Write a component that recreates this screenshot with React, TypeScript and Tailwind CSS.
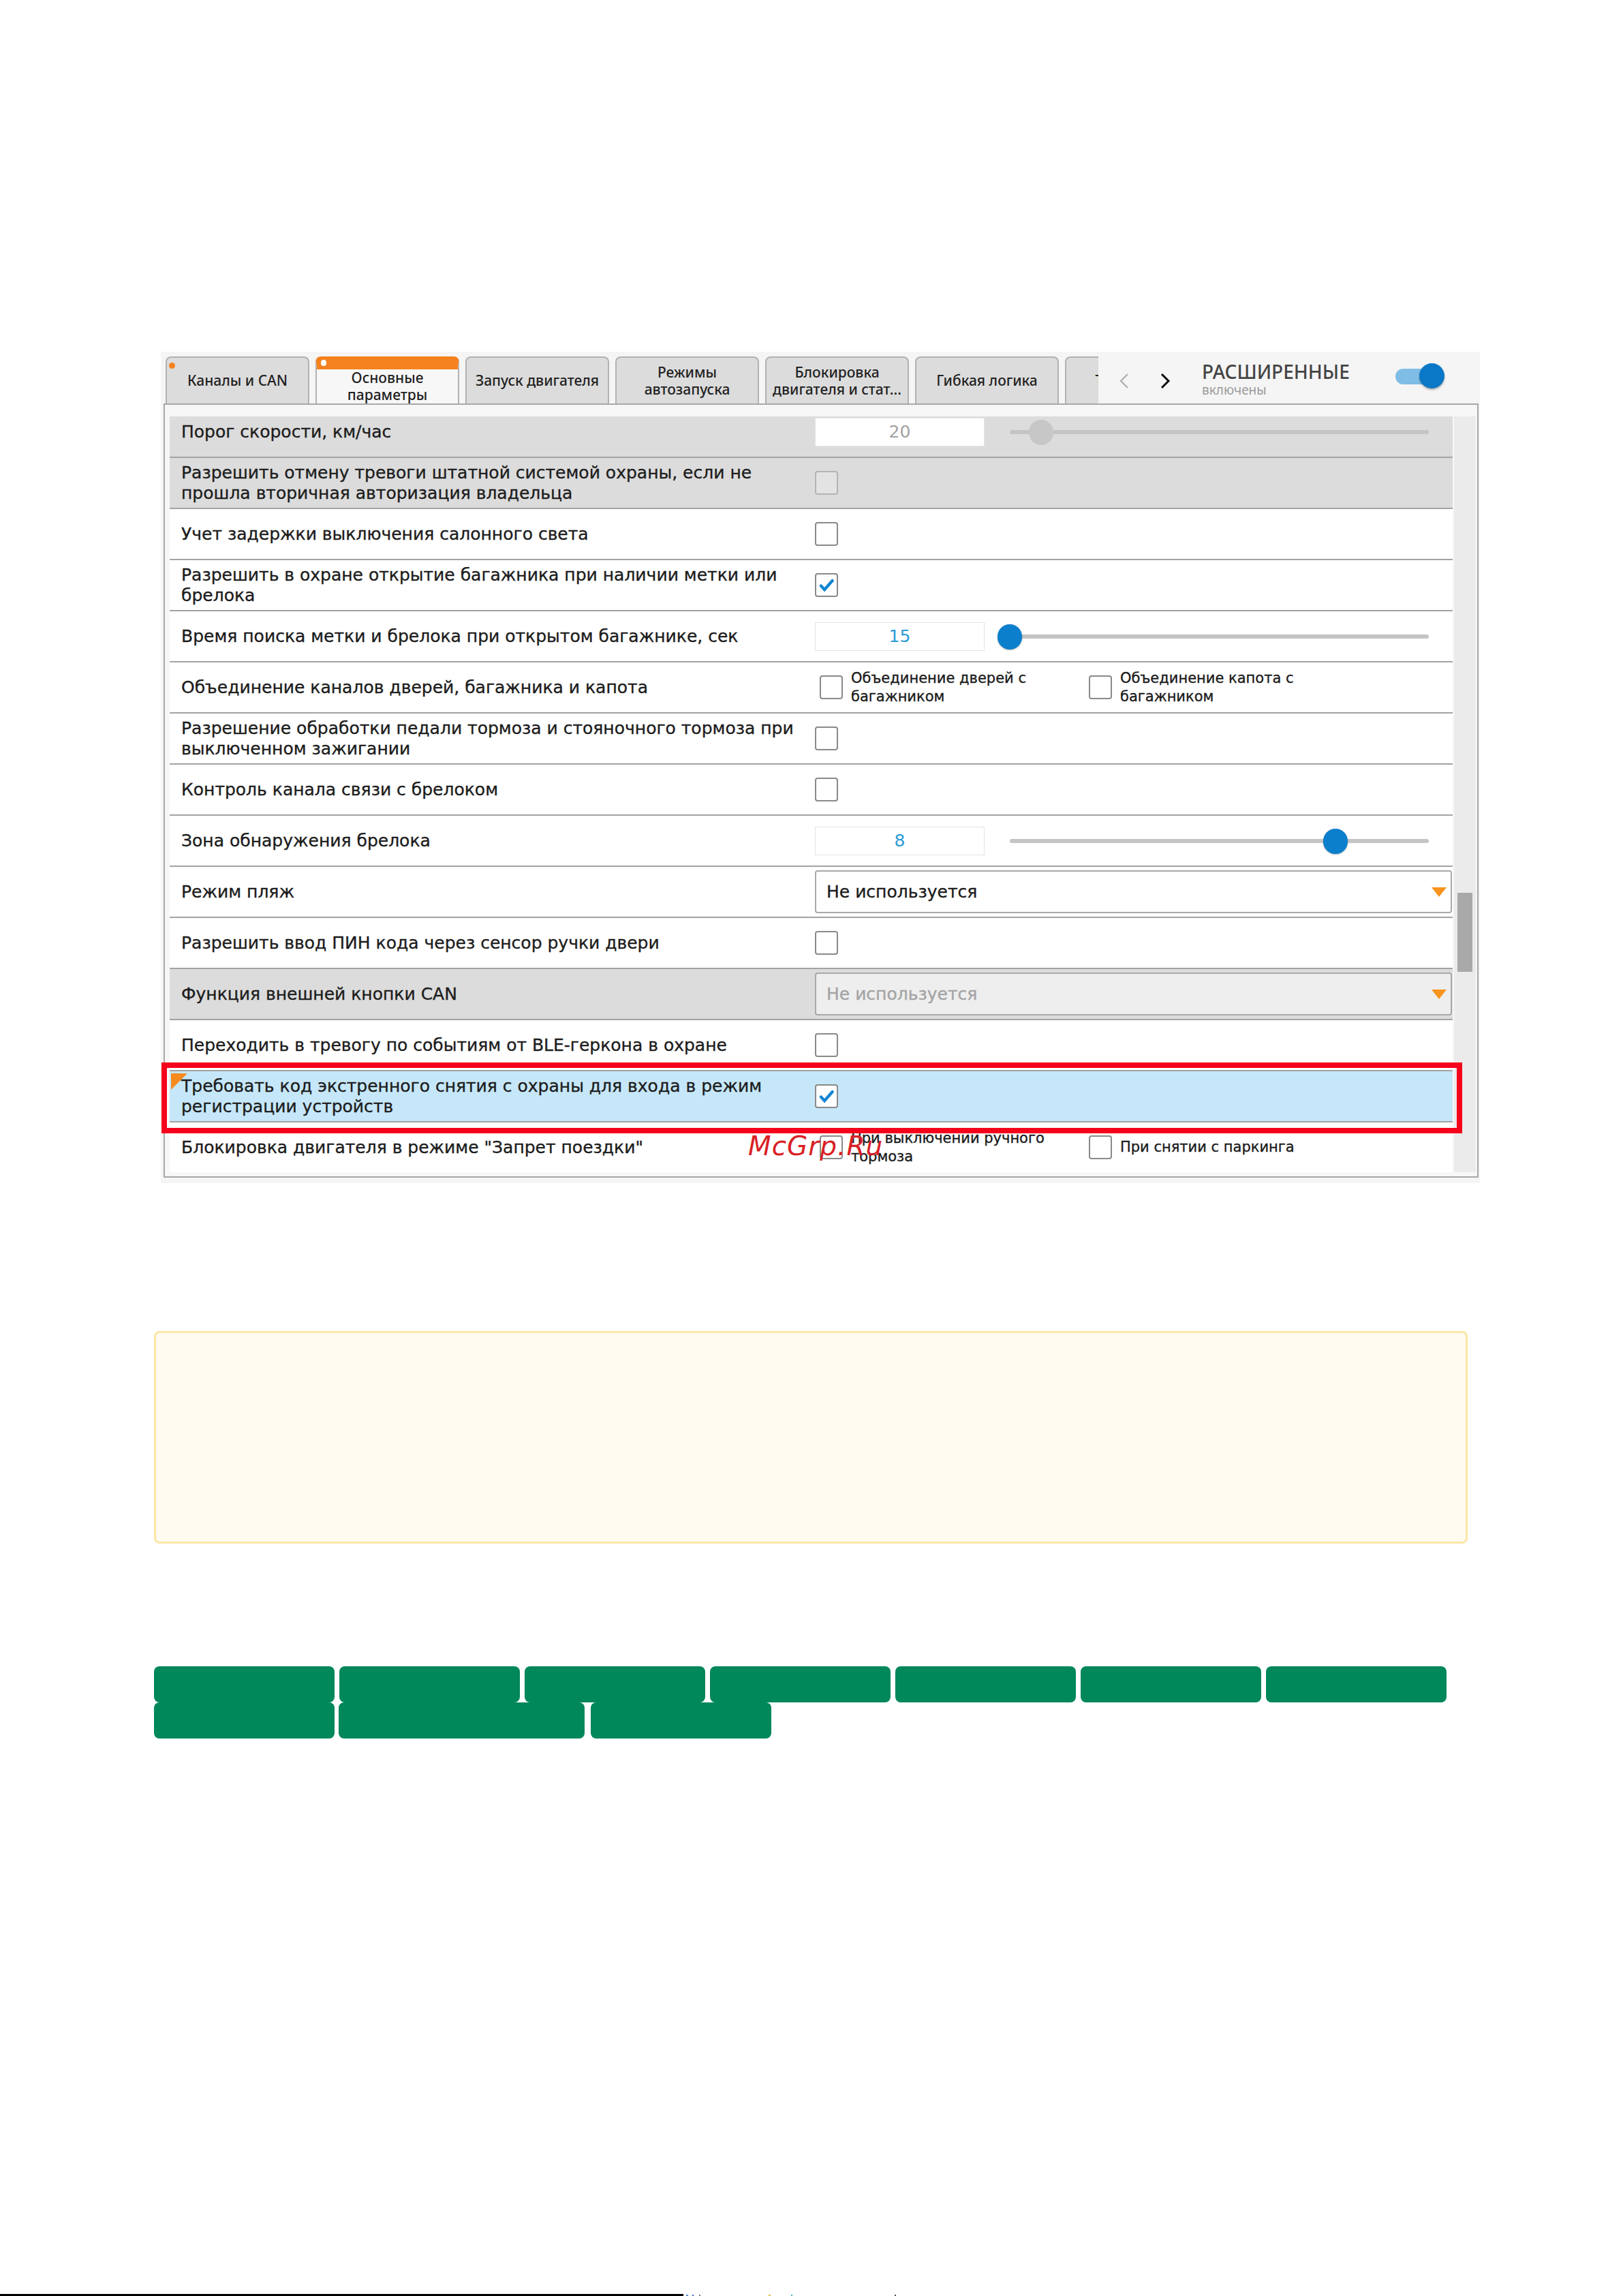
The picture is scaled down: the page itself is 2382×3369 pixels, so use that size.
import React from "react";

type Control =
  | { kind: "check"; checked?: boolean; disabled?: boolean }
  | { kind: "slider"; value: string; knob: number; disabled?: boolean }
  | { kind: "select"; disabled?: boolean }
  | { kind: "pair"; a: string[]; b: string[] };

type Row = { label: string[]; tone?: "gray" | "blue"; control: Control };

const rows: Row[] = [
  { label: ["Порог скорости, км/час"], tone: "gray", control: { kind: "slider", value: "20", knob: 46, disabled: true } },
  {
    label: ["Разрешить отмену тревоги штатной системой охраны, если не", "прошла вторичная авторизация владельца"],
    tone: "gray",
    control: { kind: "check", disabled: true },
  },
  { label: ["Учет задержки выключения салонного света"], control: { kind: "check" } },
  {
    label: ["Разрешить в охране открытие багажника при наличии метки или", "брелока"],
    control: { kind: "check", checked: true },
  },
  { label: ["Время поиска метки и брелока при открытом багажнике, сек"], control: { kind: "slider", value: "15", knob: 0 } },
  {
    label: ["Объединение каналов дверей, багажника и капота"],
    control: { kind: "pair", a: ["Объединение дверей с", "багажником"], b: ["Объединение капота с", "багажником"] },
  },
  {
    label: ["Разрешение обработки педали тормоза и стояночного тормоза при", "выключенном зажигании"],
    control: { kind: "check" },
  },
  { label: ["Контроль канала связи с брелоком"], control: { kind: "check" } },
  { label: ["Зона обнаружения брелока"], control: { kind: "slider", value: "8", knob: 478 } },
  { label: ["Режим пляж"], control: { kind: "select" } },
  { label: ["Разрешить ввод ПИН кода через сенсор ручки двери"], control: { kind: "check" } },
  { label: ["Функция внешней кнопки CAN"], tone: "gray", control: { kind: "select", disabled: true } },
  { label: ["Переходить в тревогу по событиям от BLE-геркона в охране"], control: { kind: "check" } },
  {
    label: ["Требовать код экстренного снятия с охраны для входа в режим", "регистрации устройств"],
    tone: "blue",
    control: { kind: "check", checked: true },
  },
  {
    label: ['Блокировка двигателя в режиме "Запрет поездки"'],
    control: { kind: "pair", a: ["При выключении ручного", "тормоза"], b: ["При снятии с паркинга"] },
  },
];

const tabs = [
  { t: ["Каналы и CAN"], dot: true },
  { t: ["Основные", "параметры"], active: true },
  { t: ["Запуск двигателя"] },
  { t: ["Режимы", "автозапуска"] },
  { t: ["Блокировка", "двигателя и стат..."] },
  { t: ["Гибкая логика"] },
  { t: ["Телематика"] },
];

// thin stroke to match the slightly heavier text of the screenshot
const heavy = "[-webkit-text-stroke:0.35px_currentColor]";

function Box({ checked, disabled }: { checked?: boolean; disabled?: boolean }) {
  return (
    <div
      className={`w-[34px] h-[35px] shrink-0 rounded-[4px] border-2 flex items-center justify-center ${
        disabled ? "border-[#b4b4b4] bg-[#e3e3e3]" : "border-[#8a8a8a] bg-white"
      }`}
    >
      {checked && (
        <svg viewBox="0 0 24 24" className="w-[26px] h-[26px]">
          <path d="M4.5 12.5l4.8 5.2L20 5.5" stroke="#1286d2" strokeWidth="4" fill="none" strokeLinecap="round" />
        </svg>
      )}
    </div>
  );
}

function Slider({ value, knob, disabled }: { value: string; knob: number; disabled?: boolean }) {
  return (
    <div className="flex items-center h-full">
      <div
        className={`w-[249px] h-[42px] bg-white border border-[#e4e4e4] flex items-center justify-center text-[25px] ${
          disabled ? "text-[#a2a2a2]" : "text-[#2a9bd6]"
        }`}
      >
        {value}
      </div>
      <div className="relative ml-[37px] w-[615px] h-[38px]">
        <div className="absolute left-0 right-0 top-[16px] h-[6px] rounded-full bg-[#c4c4c4]" />
        <div
          className={`absolute top-[1px] w-[36px] h-[37px] rounded-full ${
            disabled ? "bg-[#c7c7c7]" : "bg-[#0b7ecc] shadow-[0_1px_2px_rgba(0,0,0,0.3)]"
          }`}
          style={{ left: knob - 18 }}
        />
      </div>
    </div>
  );
}

function Select({ disabled }: { disabled?: boolean }) {
  return (
    <div className="flex items-center h-full">
      <div
        className={`w-[935px] h-[63px] rounded-[4px] border-2 border-[#a9a9a9] flex items-center justify-between pl-[15px] pr-[6px] text-[25px] ${heavy} ${
          disabled ? "bg-[#eeeeee] text-[#a4a4a4]" : "bg-white text-[#1b1b1b]"
        }`}
      >
        <span>Не используется</span>
        <svg viewBox="0 0 22 14" className="w-[22px] h-[14px]">
          <polygon points="0,0 22,0 11,14" fill="#f7931e" />
        </svg>
      </div>
    </div>
  );
}

function Pair({ a, b }: { a: string[]; b: string[] }) {
  const opt = (lines: string[]) => (
    <div className="w-[395px] flex items-center gap-[12px]">
      <Box />
      <div className={`text-[21px] leading-[27px] text-[#1b1b1b] ${heavy}`}>
        {lines.map((l) => (
          <div key={l} className="whitespace-nowrap">
            {l}
          </div>
        ))}
      </div>
    </div>
  );
  return (
    <div className="flex items-center h-full pl-[7px]">
      {opt(a)}
      {opt(b)}
    </div>
  );
}

function SettingRow({ row }: { row: Row }) {
  const c = row.control;
  const bg = row.tone === "gray" ? "bg-[#dcdcdc]" : row.tone === "blue" ? "bg-[#c6e7f9]" : "bg-white";
  return (
    <div className={`relative h-[75px] shrink-0 flex border-b-2 border-[#a3a3a3] ${bg}`}>
      {row.tone === "blue" && (
        <svg viewBox="0 0 24 24" className="absolute left-[2px] top-[3px] w-[24px] h-[24px]">
          <polygon points="0,0 24,0 0,24" fill="#f58a1f" />
        </svg>
      )}
      <div className={`w-[947px] pl-[17px] flex flex-col justify-center text-[25px] leading-[30px] text-[#1c1c1c] ${heavy}`}>
        {row.label.map((l) => (
          <div key={l} className="whitespace-nowrap">
            {l}
          </div>
        ))}
      </div>
      <div className="flex-1">
        {c.kind === "check" && (
          <div className="flex items-center h-full">
            <Box checked={c.checked} disabled={c.disabled} />
          </div>
        )}
        {c.kind === "slider" && <Slider value={c.value} knob={c.knob} disabled={c.disabled} />}
        {c.kind === "select" && <Select disabled={c.disabled} />}
        {c.kind === "pair" && <Pair a={c.a} b={c.b} />}
      </div>
    </div>
  );
}

function Screenshot() {
  return (
    <div className="relative ml-[236px] w-[1936px] h-[1220px] bg-[#f5f5f5] flex flex-col">
      {/* tab strip */}
      <div className="h-[76px] flex items-end">
        <div className="ml-[7px] w-[1369px] h-[69px] overflow-hidden flex gap-[9px] font-['Noto_Sans',sans-serif]">
          {tabs.map((tab, i) => (
            <div
              key={i}
              className={`relative w-[211px] h-[69px] shrink-0 rounded-t-[8px] border-2 border-b-0 border-[#b2b2b2] flex flex-col items-center justify-center text-center text-[21px] leading-[25px] font-medium text-[#222] ${
                tab.active ? "bg-[#f7f7f7] border-t-[19px] border-t-[#f5821f]" : "bg-[#dcdcdc]"
              }`}
            >
              {tab.dot && <div className="absolute left-[3px] top-[7px] w-[9px] h-[9px] rounded-full bg-[#f5821f]" />}
              {tab.active && <div className="absolute left-[6px] top-[-14px] w-[8px] h-[9px] rounded-full bg-white" />}
              {tab.t.map((l) => (
                <div key={l} className="whitespace-nowrap">
                  {l}
                </div>
              ))}
            </div>
          ))}
        </div>
        <div className="flex-1 h-[76px] flex items-center font-['Noto_Sans',sans-serif]">
          <svg viewBox="0 0 16 22" className="ml-[30px] w-[16px] h-[22px] mt-[10px]">
            <polyline points="13,1 3,11 13,21" stroke="#a9a9a9" strokeWidth="2" fill="none" />
          </svg>
          <svg viewBox="0 0 16 22" className="ml-[44px] w-[16px] h-[22px] mt-[10px]">
            <polyline points="3,1 13,11 3,21" stroke="#111" strokeWidth="3" fill="none" />
          </svg>
          <div className="ml-[46px] mt-[4px] flex flex-col">
            <span className="text-[28px] leading-[31px] font-medium text-[#454545]">РАСШИРЕННЫЕ</span>
            <span className="text-[19px] leading-[22px] text-[#9b9b9b]">включены</span>
          </div>
          <div className="relative ml-auto mr-[52px] mb-[4px] w-[72px] h-[38px]">
            <div className="absolute left-0 right-[8px] top-[8px] h-[23px] rounded-full bg-[#7fbde6]" />
            <div className="absolute right-0 top-0 w-[37px] h-[37px] rounded-full bg-[#0a78c7] shadow-[0_2px_3px_rgba(0,0,0,0.3)]" />
          </div>
        </div>
      </div>

      {/* panel */}
      <div className="ml-[4px] w-[1930px] h-[1136px] border-2 border-[#a8a8a8] bg-[#f7f7f7] flex pt-[17px] pb-[6px] pl-[7px]">
        <div className="w-[1883px] h-[1109px] overflow-hidden font-['DejaVu_Sans',sans-serif]">
          <div className="-mt-[14px] flex flex-col">
            {rows.map((r, i) => (
              <SettingRow key={i} row={r} />
            ))}
          </div>
        </div>
        <div className="ml-[2px] w-[32px] h-[1109px] bg-[#ebebeb] flex flex-col items-center">
          <div className="mt-[699px] w-[22px] h-[116px] bg-[#a9a9a9]" />
        </div>
      </div>

      {/* annotation overlays */}
      <div className="absolute left-[1px] top-[1043px] w-[1909px] h-[104px] border-[8px] border-[#f5021c]" />
      <div className="absolute left-[862px] top-[1143px] text-[39px] leading-[46px] italic tracking-[1px] text-[#d91f26] font-['DejaVu_Sans',sans-serif]">
        McGrp.Ru
      </div>
    </div>
  );
}

export default function App() {
  return (
    <div className="w-full h-[3369px] bg-white flex flex-col pt-[516px]">
      <Screenshot />

      <div className="ml-[226px] mt-[217px] w-[1928px] h-[312px] rounded-[8px] border-[3px] border-[#fde6a6] bg-[#fffbf1]" />

      <div className="ml-[226px] mt-[180px] flex flex-col">
        <div className="flex gap-[7px]">
          {[0, 1, 2, 3, 4, 5, 6].map((i) => (
            <div key={i} className="w-[265px] h-[53px] rounded-[8px] bg-[#00875a]" />
          ))}
        </div>
        <div className="flex gap-[6px]">
          <div className="w-[265px] h-[53px] rounded-[8px] bg-[#00875a]" />
          <div className="w-[361px] h-[53px] rounded-[8px] bg-[#00875a]" />
          <div className="ml-[3px] w-[265px] h-[53px] rounded-[8px] bg-[#00875a]" />
        </div>
      </div>

      <div className="mt-auto flex items-end h-[3px]">
        <div className="w-[1003px] h-[3px] bg-black" />
        <div className="ml-[4px] w-[3px] h-[2px] bg-[#5b8ed8]" />
        <div className="ml-[6px] w-[2px] h-[2px] bg-[#3a6bd1]" />
        <div className="ml-[8px] w-[2px] h-[2px] bg-[#7a7a7a]" />
        <div className="ml-[100px] w-[3px] h-[2px] bg-[#e3c24a]" />
        <div className="ml-[30px] w-[2px] h-[2px] bg-[#45b8c9]" />
        <div className="ml-[150px] w-[2px] h-[2px] bg-[#555]" />
      </div>
    </div>
  );
}
